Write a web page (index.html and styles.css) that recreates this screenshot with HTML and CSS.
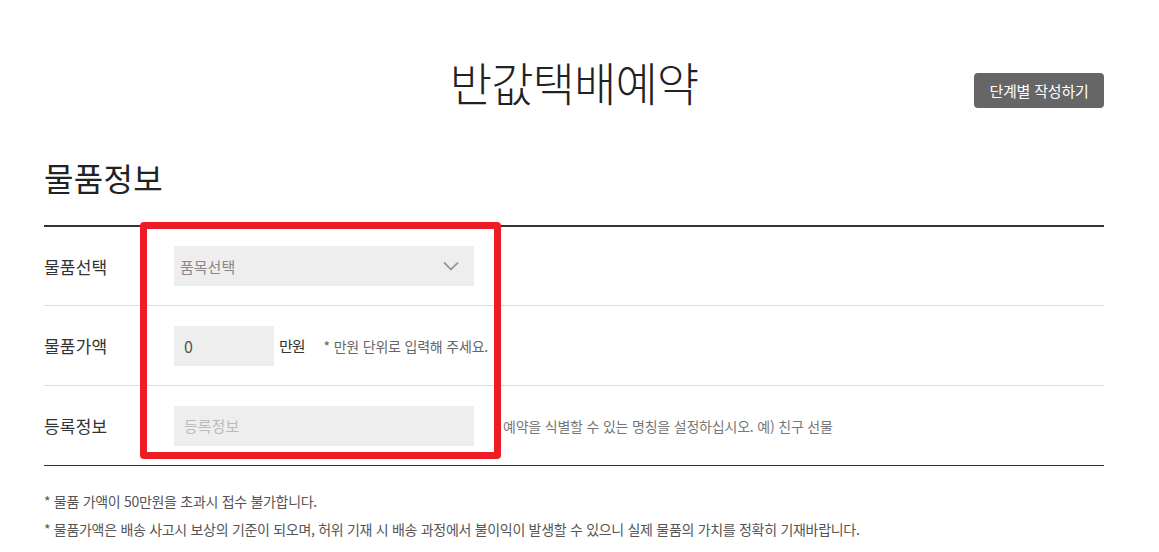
FILE: index.html
```html
<!DOCTYPE html>
<html lang="ko">
<head>
<meta charset="utf-8">
<title>반값택배예약</title>
<link rel="stylesheet" href="styles.css">
</head>
<body>
<div class="page">
  <header class="top">
    <div></div>
    <h1 class="title">반값택배예약</h1>
    <div class="top-right"><button class="step-btn" type="button">단계별 작성하기</button></div>
  </header>

  <h2 class="section-title">물품정보</h2>

  <div class="form">
    <div class="row">
      <div class="label">물품선택</div>
      <div class="field">
        <div class="select">
          <span class="select-text">품목선택</span>
          <svg class="chev" width="16" height="10" viewBox="0 0 16 10"><path d="M1 1.5 L8 8.5 L15 1.5" fill="none" stroke="#999" stroke-width="1.8"/></svg>
        </div>
      </div>
    </div>
    <div class="row">
      <div class="label">물품가액</div>
      <div class="field">
        <div class="input small">0</div>
        <span class="unit">만원</span>
        <span class="hint">* 만원 단위로 입력해 주세요.</span>
      </div>
    </div>
    <div class="row last">
      <div class="label">등록정보</div>
      <div class="field">
        <div class="input wide placeholder">등록정보</div>
        <span class="hint hint-far">예약을 식별할 수 있는 명칭을 설정하십시오. 예) 친구 선물</span>
      </div>
    </div>
    <div class="highlight"></div>
  </div>

  <ul class="notes">
    <li>* 물품 가액이 50만원을 초과시 접수 불가합니다.</li>
    <li>* 물품가액은 배송 사고시 보상의 기준이 되오며, 허위 기재 시 배송 과정에서 불이익이 발생할 수 있으니 실제 물품의 가치를 정확히 기재바랍니다.</li>
  </ul>
</div>
</body>
</html>
```

FILE: styles.css
```css
* { box-sizing: border-box; }
html, body { margin: 0; padding: 0; background: #fff; }
body {
  font-family: "Noto Sans CJK KR", "Noto Sans", sans-serif;
  color: #333;
}
.page {
  width: 1060px;
  margin-left: 44px;
  padding-top: 56px;
}
.top {
  display: grid;
  grid-template-columns: 1fr auto 1fr;
  align-items: start;
}
.title {
  margin: 0;
  font-size: 46px;
  line-height: 50px;
  font-weight: 300;
  letter-spacing: -0.9px;
  color: #222;
}
.top-right {
  display: flex;
  justify-content: flex-end;
  padding-top: 17px;
}
.step-btn {
  font-family: inherit;
  border: 0;
  background: #666;
  color: #fff;
  border-radius: 4px;
  height: 35px;
  width: 130px;
  padding: 0;
  font-size: 15px;
  letter-spacing: -0.2px;
  line-height: 35px;
}
.section-title {
  margin: 49px 0 28px;
  font-size: 32px;
  line-height: 40px;
  font-weight: 400;
  letter-spacing: 0.3px;
  color: #222;
}
.form {
  position: relative;
  border-top: 2px solid #333;
  border-bottom: 1px solid #333;
}
.row {
  display: flex;
  align-items: center;
  height: 80px;
  border-bottom: 1px solid #ddd;
}
.row:first-child { height: 79px; }
.row.last { border-bottom: 0; height: 79px; }
.label {
  width: 130px;
  font-size: 17px;
  letter-spacing: 0.2px;
  color: #333;
}
.field {
  display: flex;
  align-items: center;
}
.select {
  width: 300px;
  height: 40px;
  background: #eee;
  display: flex;
  align-items: center;
  justify-content: space-between;
  padding: 0 15px 0 6px;
}
.select-text {
  font-size: 15px;
  letter-spacing: 0;
  color: #888;
}
.chev { display: block; }
.input {
  height: 40px;
  background: #eee;
  display: flex;
  align-items: center;
  padding-left: 10px;
  font-size: 16px;
  color: #555;
}
.input.small { width: 100px; }
.input.wide { width: 300px; }
.input.placeholder {
  color: #bbb;
  font-size: 15px;
  letter-spacing: 0;
}
.unit {
  margin-left: 5px;
  font-size: 15px;
  letter-spacing: -1px;
  color: #333;
}
.hint {
  margin-left: 19px;
  font-size: 14px;
  letter-spacing: -0.2px;
  color: #666;
}
.hint-far {
  margin-left: 29px;
  letter-spacing: -0.2px;
  color: #777;
}
.highlight {
  position: absolute;
  left: 96px;
  top: -5px;
  width: 361px;
  height: 237px;
  border: 7px solid #ee1c25;
  border-radius: 4px;
  pointer-events: none;
}
.notes {
  list-style: none;
  margin: 21px 0 0;
  padding: 0;
  font-size: 14px;
  line-height: 28px;
  letter-spacing: -0.3px;
  color: #555;
}
```
